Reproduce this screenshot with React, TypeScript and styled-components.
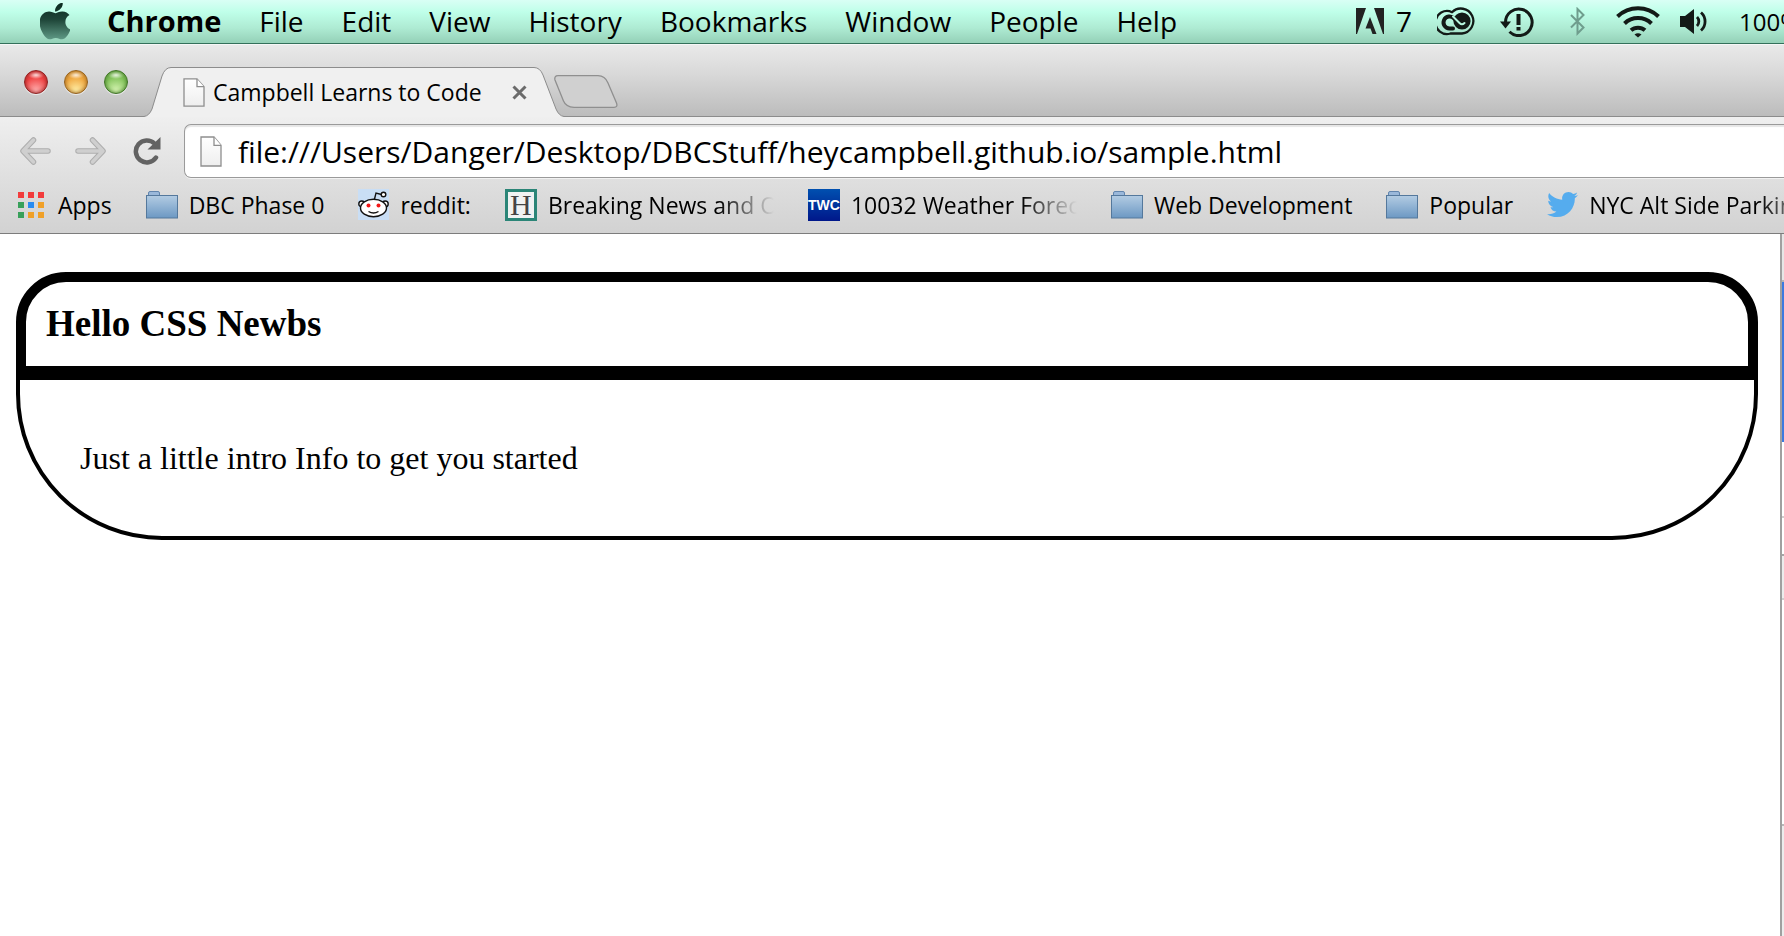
import React from 'react';
import styled, { createGlobalStyle } from 'styled-components';
import { FaApple, FaTwitter } from 'react-icons/fa';

const GlobalStyle = createGlobalStyle`
  * { box-sizing: border-box; }
  body { margin: 0; background: #fff; overflow: hidden; }
  button, input { font: inherit; color: inherit; border: 0; margin: 0; padding: 0; background: none; }
`;

const Screen = styled.div`
  display: flex;
  flex-direction: column;
  min-height: 100vh;
  overflow: hidden;
  font-family: 'Open Sans', sans-serif;
  color: #000;
`;

/* ---------- system menu bar ---------- */

const MenuBar = styled.header`
  display: flex;
  align-items: center;
  height: 44px;
  padding-left: 40px;
  overflow: hidden;
  white-space: nowrap;
  font-size: 28px;
  line-height: 36px;
  background: linear-gradient(#d9fff5 0, #bfffe9 12px, #aeebd3 28px, #96d2b9 42px);
  border-bottom: 1px solid #33705a;
`;

const AppleButton = styled.button`
  display: flex;
  width: 30px;
  margin-right: 17px;
`;

const MenuButton = styled.button<{ $strong?: boolean }>`
  padding: 0 18px 2px 20px;
  font-size: ${(p) => (p.$strong ? 29 : 28)}px;
  font-weight: ${(p) => (p.$strong ? 700 : 400)};
`;

const StatusArea = styled.div`
  display: flex;
  flex: none;
  align-items: center;
  width: 428px;
  margin-left: auto;
`;

const StatusIcon = styled.svg<{ $gap: number }>`
  flex: none;
  margin-right: ${(p) => p.$gap}px;
`;

const StatusCount = styled.span`
  margin-right: 25px;
  padding-bottom: 2px;
`;

const BatteryText = styled.span`
  font-size: 24px;
`;

/* ---------- window tab strip ---------- */

const TabStrip = styled.div`
  display: flex;
  align-items: flex-end;
  height: 73px;
  padding-left: 24px;
  background: linear-gradient(#e9e9e9, #d9d9d9 40%, #bcbcbc);
  border-top: 1px solid #f6f6f6;
  border-bottom: 1px solid #8c8c8c;
`;

const WindowButtons = styled.div`
  display: flex;
  gap: 16px;
  margin: 0 16px 22px 0;
`;

const WindowButton = styled.button<{ $rim: string; $base: string; $glow: string }>`
  width: 24px;
  height: 24px;
  border: 1px solid ${(p) => p.$rim};
  border-radius: 50%;
  background:
    radial-gradient(ellipse 8px 4px at 50% 4px, rgba(255, 255, 255, 0.85), transparent),
    radial-gradient(circle at 50% 90%, ${(p) => p.$glow}, ${(p) => p.$base} 60%);
  box-shadow: inset 0 0 4px ${(p) => p.$rim}, 0 1px 0 rgba(255, 255, 255, 0.6);
`;

const Tab = styled.div`
  display: flex;
  margin-bottom: -1px;
`;

const TabFace = styled.div`
  display: flex;
  align-items: center;
  width: 363px;
  height: 50px;
  padding: 0 7px 0 12px;
  white-space: nowrap;
  font-size: 23px;
  line-height: 32px;
  background: #f0f0f0;
  border-top: 1px solid #8c8c8c;
`;

const TabTitle = styled.span`
  flex: 1;
  padding: 0 0 2px 8px;
`;

const CloseButton = styled.button`
  display: flex;
`;

const NewTabButton = styled.button`
  display: flex;
  margin: 0 0 8px -10px;
`;

/* ---------- toolbar and bookmarks ---------- */

const Chrome = styled.div`
  background: linear-gradient(#efefef, #e0e0e0 50%, #d2d2d2);
  border-bottom: 1px solid #7c7c7c;
`;

const Toolbar = styled.div`
  display: flex;
  align-items: center;
  padding: 7px 0 0 20px;
`;

const ToolButton = styled.button<{ $gap: number }>`
  display: flex;
  flex: none;
  margin-right: ${(p) => p.$gap}px;
`;

const AddressBox = styled.label`
  display: flex;
  flex: 1;
  align-items: center;
  gap: 16px;
  height: 54px;
  padding-left: 15px;
  background: #fff;
  border: 1px solid #9a9a9a;
  border-right: 0;
  border-radius: 7px 0 0 7px;
  box-shadow: inset 0 2px 1px #e6e6e6, 0 1px 0 #f2f2f2;
`;

const AddressInput = styled.input`
  flex: 1;
  min-width: 0;
  height: 42px;
  outline: 0;
  font-size: 30px;
`;

const BookmarkBar = styled.nav`
  display: flex;
  align-items: center;
  gap: 34px;
  height: 55px;
  padding: 0 0 2px 18px;
  white-space: nowrap;
  font-size: 23px;
  line-height: 32px;
`;

const Bookmark = styled.a`
  display: flex;
  flex: none;
  align-items: center;
  gap: 11px;
  color: inherit;
  text-decoration: none;
`;

const BookmarkLabel = styled.span<{ $fade?: boolean }>`
  ${(p) =>
    p.$fade &&
    `
    width: 226px;
    overflow: hidden;
    mask-image: linear-gradient(to right, #000 170px, transparent);
  `}
`;

const HuffIcon = styled.span`
  width: 32px;
  height: 32px;
  border: 3px solid #2b8577;
  background: #f0f2f2;
  color: #444;
  font-family: 'Liberation Serif', serif;
  font-size: 30px;
  line-height: 26px;
  text-align: center;
`;

const WeatherIcon = styled.span`
  width: 32px;
  height: 32px;
  background: linear-gradient(#0050b0, #00178a);
  color: #fff;
  font-family: 'Liberation Sans', sans-serif;
  font-size: 14px;
  font-weight: 700;
  text-align: center;
`;

/* ---------- page ---------- */

const Viewport = styled.div`
  display: flex;
  flex: 1;
`;

const Page = styled.main`
  flex: 1;
  padding: 38px 22px 0 16px;
  font-family: 'Liberation Serif', serif;
`;

const Heading = styled.h1`
  margin: 0;
  padding: 20px;
  border: 10px solid #000;
  border-radius: 50px 50px 0 0;
  font-size: 37px;
  line-height: 44px;
`;

const Intro = styled.p`
  margin: 0;
  padding: 60px;
  border: 4px solid #000;
  border-radius: 0 0 146px 146px;
  font-size: 32px;
  line-height: 36px;
`;

const Inspector = styled.aside`
  display: flex;
  flex-direction: column;
  width: 4px;
  border-left: 2px solid #a0a0a0;
`;

const InspectorRow = styled.div<{ $height?: number; $fill: string; $line?: string }>`
  flex: ${(p) => (p.$height ? `0 0 ${p.$height}px` : '1')};
  background: ${(p) => p.$fill};
  border-bottom: ${(p) => (p.$line ? `2px solid ${p.$line}` : '0')};
`;

/* ---------- icons ---------- */

const PageIcon = ({ height }: { height: number }) => (
  <svg width="22" height={height} viewBox="0 0 22 30" preserveAspectRatio="none" aria-hidden="true">
    <defs>
      <linearGradient id="sheet" x2="0" y2="1">
        <stop stopColor="#fff" />
        <stop offset="1" stopColor="#eee" />
      </linearGradient>
    </defs>
    <path d="M1 1H14L21 9V29H1Z" fill="url(#sheet)" stroke="#8e8e8e" strokeWidth="1.3" />
    <path d="M14 1V9H21" fill="#fff" stroke="#8e8e8e" strokeWidth="1.3" />
  </svg>
);

const FolderIcon = () => (
  <svg width="32" height="28" viewBox="0 0 32 28" aria-hidden="true">
    <defs>
      <linearGradient id="folder" x2="0" y2="1">
        <stop stopColor="#b3cce3" />
        <stop offset="1" stopColor="#6c98c3" />
      </linearGradient>
    </defs>
    <path d="M2.5 5V2Q2.5.5 4 .5H12Q13.500 .5 13.500 2V5" fill="#9ab8da" stroke="#6285ad" />
    <rect x=".5" y="4.500" width="31" height="22.500" fill="url(#folder)" stroke="#54789c" />
  </svg>
);

const AppsIcon = () => (
  <svg width="29" height="26" viewBox="0 0 29 26" aria-hidden="true">
    {['#f23c3c', '#f23c3c', '#f23c3c', '#38a05a', '#2a8cf0', '#f0a028', '#38a05a', '#f0a028', '#f0a028'].map((fill, i) => (
      <rect key={i} x={(i % 3) * 10} y={Math.floor(i / 3) * 10} width="6" height="6" fill={fill} />
    ))}
  </svg>
);

const RedditIcon = () => (
  <svg width="31" height="31" viewBox="0 0 31 31" aria-hidden="true">
    <rect width="31" height="31" fill="#c9def5" />
    <g fill="#fff" stroke="#111" strokeWidth="1.400">
      <path d="M16 12L18 4L23.500 5.500" fill="none" />
      <circle cx="25.500" cy="5.500" r="2.300" />
      <circle cx="3.800" cy="15" r="3" />
      <circle cx="27.200" cy="15" r="3" />
      <ellipse cx="15.500" cy="19" rx="13" ry="8.700" />
      <path d="M10.500 22.500Q15.500 25.500 20.500 22.500" fill="none" />
    </g>
    <circle cx="10.500" cy="16.500" r="2" fill="#f21818" />
    <circle cx="20.500" cy="16.500" r="2" fill="#f21818" />
  </svg>
);

const ArrowIcon = ({ forward }: { forward?: boolean }) => (
  <svg width="31" height="28" viewBox="0 0 31 28" aria-hidden="true">
    <g transform={forward ? 'translate(31 0) scale(-1 1)' : undefined} fill="none" strokeLinecap="round" strokeLinejoin="round">
      <path d="M13.500 3L3 14L13.500 25M4 14H28" stroke="#adadad" strokeWidth="5.500" />
      <path d="M13.500 3L3 14L13.500 25M4 14H28" stroke="#cfcfcf" strokeWidth="3.500" />
    </g>
  </svg>
);

const ReloadIcon = () => (
  <svg width="28" height="28" viewBox="0 0 28 28" aria-hidden="true">
    <path d="M21.500 6.500A11 11 0 1 0 23 20.500" fill="none" stroke="#636363" strokeWidth="4.500" strokeLinecap="round" />
    <path d="M27.500 0V12.500H14.500Z" fill="#636363" />
  </svg>
);

const menus = ['File', 'Edit', 'View', 'History', 'Bookmarks', 'Window', 'People', 'Help'];

const bookmarks = [
  { label: 'Apps', icon: <AppsIcon /> },
  { label: 'DBC Phase 0', icon: <FolderIcon /> },
  { label: 'reddit:', icon: <RedditIcon /> },
  { label: 'Breaking News and O', icon: <HuffIcon>H</HuffIcon>, fade: true },
  { label: '10032 Weather Forec', icon: <WeatherIcon>TWC</WeatherIcon>, fade: true },
  { label: 'Web Development', icon: <FolderIcon /> },
  { label: 'Popular', icon: <FolderIcon /> },
  { label: 'NYC Alt Side Parking', icon: <FaTwitter size={31} color="#55acee" />, fade: true },
];

const ink = '#131a17';

export default function App() {
  const [address, setAddress] = React.useState('file:///Users/Danger/Desktop/DBCStuff/heycampbell.github.io/sample.html');
  return (
    <Screen>
      <GlobalStyle />
      <MenuBar>
        <AppleButton aria-label="Apple menu">
          <svg width="30" height="38" viewBox="0 0 30 38" aria-hidden="true">
            <defs>
              <linearGradient id="apple" x2="0" y2="1">
                <stop stopColor="#0c2a20" />
                <stop offset=".45" stopColor="#1d4437" />
                <stop offset="1" stopColor="#5f9985" />
              </linearGradient>
            </defs>
            <FaApple x="-6" y="-3" size={42} fill="url(#apple)" />
          </svg>
        </AppleButton>
        <MenuButton $strong>Chrome</MenuButton>
        {menus.map((name) => (
          <MenuButton key={name}>{name}</MenuButton>
        ))}
        <StatusArea>
          <StatusIcon $gap={12} width="28" height="28" viewBox="0 0 28 28" fill="#222" aria-hidden="true">
            <path d="M0 0H10L1 26H0ZM18 0H28V26H27ZM14 9L20.500 26H16.500L14.500 20.500H9.500Z" />
          </StatusIcon>
          <StatusCount>7</StatusCount>
          <StatusIcon $gap={24} width="39" height="30" viewBox="0 0 39 30" fill="none" aria-hidden="true">
            <path d="M13.500 26.500A11.500 11.500 0 1 1 15 5.200A12.500 12.500 0 1 1 25 26.500Z" stroke={ink} strokeWidth="2.300" />
            <path d="M16 21.500H12.500A6 6 0 1 1 17 11.500L23 17.500" stroke={ink} strokeWidth="4" strokeLinecap="round" />
            <circle cx="25" cy="14" r="8.600" fill={ink} />
            <path d="M16 9.500L22.500 16Q25 18.500 27.500 16" stroke="#b6f5de" strokeWidth="2" strokeLinecap="round" />
          </StatusIcon>
          <StatusIcon $gap={36} width="34" height="30" viewBox="0 0 34 30" fill="none" aria-hidden="true">
            <path d="M5.500 15A13.300 13.300 0 1 1 9.500 24.800" stroke={ink} strokeWidth="3" />
            <path d="M0 14.500H11L5.500 21.500Z" fill={ink} />
            <path d="M18.500 7V18M18.500 20V23.500" stroke={ink} strokeWidth="4" />
          </StatusIcon>
          <StatusIcon $gap={31} width="15" height="29" viewBox="0 0 15 29" fill="none" stroke="#6f9d8d" strokeWidth="2" aria-hidden="true">
            <path d="M1 8L13.500 20.500L7.500 26.500V2L13.500 8L1 20.500" />
          </StatusIcon>
          <StatusIcon $gap={20} width="44" height="32" viewBox="0 0 44 32" fill="none" stroke={ink} strokeWidth="4" aria-hidden="true">
            <path d="M1.500 10.500A29.500 29.500 0 0 1 42.500 10.500M8.500 17.500A19.500 19.500 0 0 1 35.500 17.500M15 24.300A10.500 10.500 0 0 1 29 24.300" />
            <path d="M22 31.500L18.500 28.500Q22 26 25.500 28.500Z" fill={ink} stroke="none" />
          </StatusIcon>
          <StatusIcon $gap={30} width="29" height="25" viewBox="0 0 29 25" fill="none" stroke={ink} strokeWidth="2.800" aria-hidden="true">
            <path d="M0 7H5L14 0V25L5 18H0Z" fill={ink} stroke="none" />
            <path d="M17 8A6.500 6.500 0 0 1 17 17M21 3.500A12 12 0 0 1 21 21.500" />
          </StatusIcon>
          <BatteryText>100%</BatteryText>
        </StatusArea>
      </MenuBar>

      <TabStrip>
        <WindowButtons>
          <WindowButton aria-label="Close" $rim="#8e2020" $base="#f04444" $glow="#ffb0b0" />
          <WindowButton aria-label="Minimize" $rim="#94601c" $base="#f0a840" $glow="#fff0a8" />
          <WindowButton aria-label="Zoom" $rim="#3e7424" $base="#84c45c" $glow="#d8f5b4" />
        </WindowButtons>
        <Tab>
          <svg width="27" height="50" viewBox="0 0 27 50" aria-hidden="true">
            <path d="M0 49.500Q5 49 8 42L18 9Q21 .5 27 .5V50H0Z" fill="#f0f0f0" />
            <path d="M0 49.500Q5 49 8 42L18 9Q21 .5 27 .5" fill="none" stroke="#8c8c8c" />
          </svg>
          <TabFace>
            <PageIcon height={29} />
            <TabTitle>Campbell Learns to Code</TabTitle>
            <CloseButton aria-label="Close tab">
              <svg width="15" height="15" viewBox="0 0 15 15" aria-hidden="true">
                <path d="M1.500 1.500L13.500 13.500M13.500 1.500L1.500 13.500" stroke="#6b6b6b" strokeWidth="3" />
              </svg>
            </CloseButton>
          </TabFace>
          <svg width="30" height="50" viewBox="0 0 30 50" aria-hidden="true">
            <path d="M0 .5Q6 .5 9 8L22 42Q25 49 30 49.500V50H0Z" fill="#f0f0f0" />
            <path d="M0 .5Q6 .5 9 8L22 42Q25 49 30 49.500" fill="none" stroke="#8c8c8c" />
          </svg>
        </Tab>
        <NewTabButton aria-label="New tab">
          <svg width="64" height="33" viewBox="0 0 64 33" aria-hidden="true">
            <path d="M4 .7H44Q51 .7 54 8L62.500 28Q64 32.300 60 32.300H20Q12 32 9.500 26L1 5Q0 .7 4 .7Z" fill="#d0d0d0" stroke="#8f8f8f" strokeWidth="1.300" />
          </svg>
        </NewTabButton>
      </TabStrip>

      <Chrome>
        <Toolbar>
          <ToolButton aria-label="Back" $gap={24}><ArrowIcon /></ToolButton>
          <ToolButton aria-label="Forward" $gap={27}><ArrowIcon forward /></ToolButton>
          <ToolButton aria-label="Reload" $gap={23}><ReloadIcon /></ToolButton>
          <AddressBox>
            <PageIcon height={31} />
            <AddressInput aria-label="Address" value={address} onChange={(e) => setAddress(e.target.value)} />
          </AddressBox>
        </Toolbar>
        <BookmarkBar>
          {bookmarks.map((b) => (
            <Bookmark key={b.label} href="#">
              {b.icon}
              <BookmarkLabel $fade={b.fade}>{b.label}</BookmarkLabel>
            </Bookmark>
          ))}
        </BookmarkBar>
      </Chrome>

      <Viewport>
        <Page>
          <Heading>Hello CSS Newbs</Heading>
          <Intro>Just a little intro Info to get you started</Intro>
        </Page>
        <Inspector>
          <InspectorRow $height={48} $fill="#e6e6e6" $line="#b4b4b4" />
          <InspectorRow $height={160} $fill="#3b7ae0" />
          <InspectorRow $height={76} $fill="#fff" $line="#cfcfcf" />
          <InspectorRow $height={38} $fill="#fff" $line="#a6a6a6" />
          <InspectorRow $height={44} $fill="#ececec" $line="#cfcfcf" />
          <InspectorRow $height={226} $fill="#fff" $line="#b8b8b8" />
          <InspectorRow $fill="#ececec" />
        </Inspector>
      </Viewport>
    </Screen>
  );
}
